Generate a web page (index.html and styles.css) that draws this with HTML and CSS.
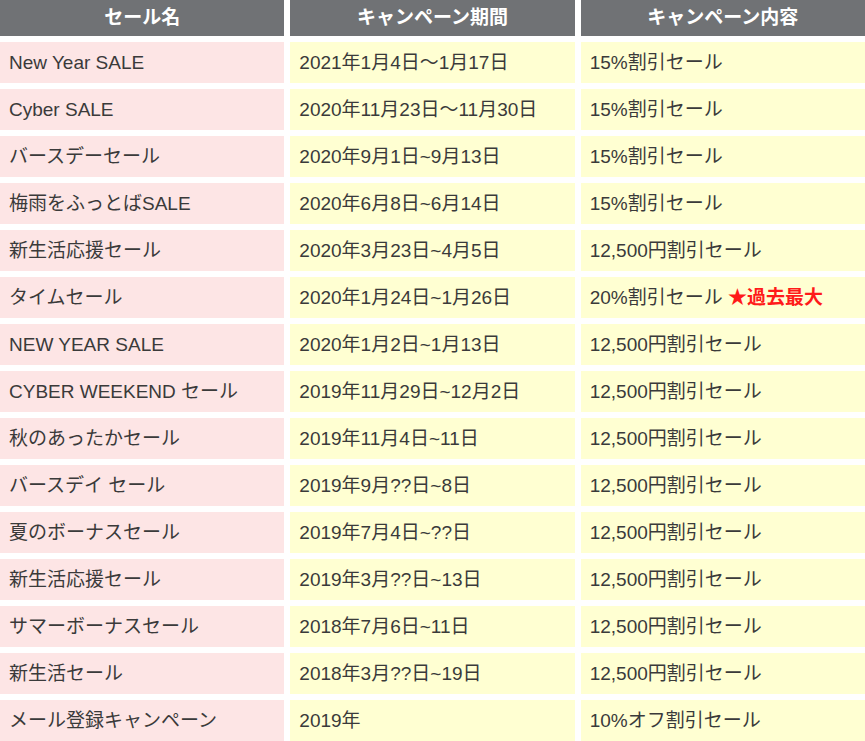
FILE: index.html
```html
<!DOCTYPE html>
<html lang="ja">
<head>
<meta charset="utf-8">
<link rel="stylesheet" href="styles.css">
</head>
<body>
<table class="sale-table">
  <thead>
    <tr><th>セール名</th><th>キャンペーン期間</th><th>キャンペーン内容</th></tr>
  </thead>
  <tbody>
    <tr><td class="name">New Year SALE</td><td>2021年1月4日〜1月17日</td><td>15%割引セール</td></tr>
    <tr><td class="name">Cyber SALE</td><td>2020年11月23日〜11月30日</td><td>15%割引セール</td></tr>
    <tr><td class="name">バースデーセール</td><td>2020年9月1日~9月13日</td><td>15%割引セール</td></tr>
    <tr><td class="name">梅雨をふっとばSALE</td><td>2020年6月8日~6月14日</td><td>15%割引セール</td></tr>
    <tr><td class="name">新生活応援セール</td><td>2020年3月23日~4月5日</td><td>12,500円割引セール</td></tr>
    <tr><td class="name">タイムセール</td><td>2020年1月24日~1月26日</td><td>20%割引セール <span class="best">★過去最大</span></td></tr>
    <tr><td class="name">NEW YEAR SALE</td><td>2020年1月2日~1月13日</td><td>12,500円割引セール</td></tr>
    <tr><td class="name">CYBER WEEKEND セール</td><td>2019年11月29日~12月2日</td><td>12,500円割引セール</td></tr>
    <tr><td class="name">秋のあったかセール</td><td>2019年11月4日~11日</td><td>12,500円割引セール</td></tr>
    <tr><td class="name">バースデイ セール</td><td>2019年9月??日~8日</td><td>12,500円割引セール</td></tr>
    <tr><td class="name">夏のボーナスセール</td><td>2019年7月4日~??日</td><td>12,500円割引セール</td></tr>
    <tr><td class="name">新生活応援セール</td><td>2019年3月??日~13日</td><td>12,500円割引セール</td></tr>
    <tr><td class="name">サマーボーナスセール</td><td>2018年7月6日~11日</td><td>12,500円割引セール</td></tr>
    <tr><td class="name">新生活セール</td><td>2018年3月??日~19日</td><td>12,500円割引セール</td></tr>
    <tr><td class="name">メール登録キャンペーン</td><td>2019年</td><td>10%オフ割引セール</td></tr>
  </tbody>
</table>
</body>
</html>
```
FILE: styles.css
```css
html, body {
  margin: 0;
  padding: 0;
  background: #ffffff;
  overflow: hidden;
}
body {
  font-family: "Liberation Sans", "Noto Sans CJK JP", sans-serif;
  color: #3a3a3a;
}
.sale-table {
  border-collapse: separate;
  border-spacing: 6px;
  margin: -6px;
  width: calc(100% + 12px);
  table-layout: fixed;
}
.sale-table th {
  height: 36px;
  padding: 0;
  background: #707275;
  color: #ffffff;
  font-size: 19px;
  line-height: 22px;
  font-weight: bold;
  text-align: center;
  vertical-align: middle;
}
.sale-table td {
  height: 41px;
  padding: 0 0 0 9px;
  background: #ffffd2;
  font-size: 19px;
  line-height: 24px;
  text-align: left;
  vertical-align: middle;
  white-space: nowrap;
}
.sale-table td.name {
  background: #fde5e5;
}
.best {
  color: #ff1a1a;
  font-weight: bold;
}
```
